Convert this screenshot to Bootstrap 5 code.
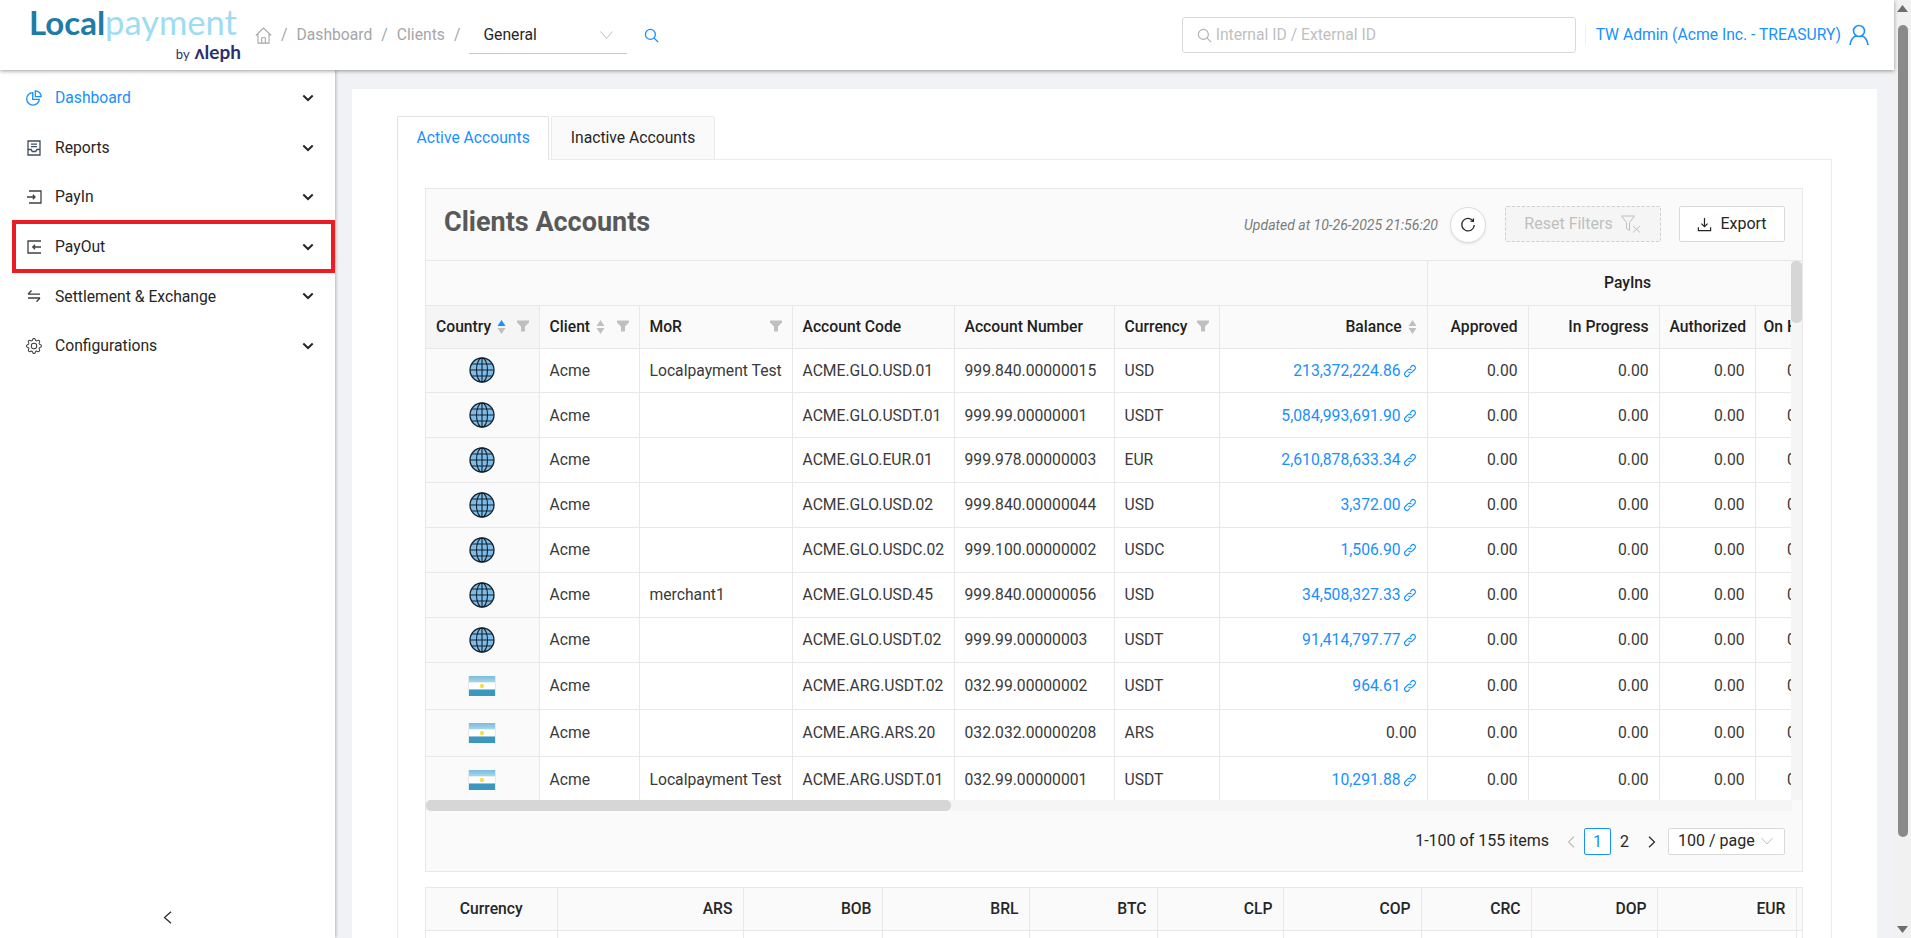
<!DOCTYPE html>
<html lang="en">
<head>
<meta charset="utf-8">
<title>Clients Accounts</title>
<link href="https://cdn.jsdelivr.net/npm/bootstrap@5.3.0/dist/css/bootstrap.min.css" rel="stylesheet">
<style>
html,body{height:938px;overflow:hidden;margin:0}
body{font-family:Roboto,"Liberation Sans",sans-serif;font-size:15.7px;background:#f0f2f5;color:#262626}
.shell{height:938px}
.shell-main{width:1894px;min-width:0}
.pg-scroll{width:17px;background:#f1f1f1;position:relative}
.pg-arrow{height:17px;font-size:0;display:flex;align-items:center;justify-content:center}
.pg-thumb{width:10px;height:812px;margin:8px auto 0;background:#8a8a8a;border-radius:5px}
.top-bar{height:70px;background:#fff;box-shadow:0 1px 4px rgba(0,0,0,.4);position:relative;z-index:3}
.logo-box{width:255px;padding-left:29px;line-height:1;flex:none}
.logo-main{font-family:Lato,sans-serif;height:40px;white-space:nowrap;margin-top:-3px;display:flex;align-items:baseline}
.logo-local{color:#1f7ca8;font-weight:700;font-size:33px}
.logo-pay{color:#9edcf3;font-weight:400;font-size:34.5px}
.logo-by{width:212px;text-align:right;font-family:Lato,sans-serif;color:#2a306d;white-space:nowrap;margin-top:-3px}
.logo-by small{font-size:13px;margin-right:5px}
.logo-by b{font-size:19px;font-weight:700}
.crumbs{color:#a6a6a6;gap:9px;white-space:nowrap}
.crumb-select{width:158px;height:38px;border-bottom:1px solid #c8c8c8;padding:0 14px;color:#262626}
.id-search{width:394px;height:36px;margin-right:9px;border:1px solid #d9d9d9;border-radius:3px;padding:0 12px 0 14px;color:#bfbfbf}
.user-link{color:#1890ff;white-space:nowrap;margin-right:25px;padding-left:10px;border-left:1px solid #f0f0f0;height:20px}
.body-row{height:868px}
.side-nav{width:335px;flex:none;background:#fff;box-shadow:1px 0 3px rgba(0,0,0,.25);padding-top:3.2px;position:relative;z-index:2}
.side-item{height:49.6px;padding:0 21px 0 26px;color:#262626;gap:13px}
.side-item.on{color:#1890ff}
.side-item svg.mi{width:16px;height:16px;flex:none}
.side-label{flex:1}
.side-mark{position:absolute;left:12px;right:0;top:0;bottom:0;border:4px solid #ed1c24;pointer-events:none;margin-top:-2px;margin-bottom:-1.4px}
.side-foot{height:42px;margin-top:auto}
.work{flex:1;min-width:0;padding:19px 17px 0 17px;overflow:hidden}
.sheet{background:#fff;height:849px;padding:27px 45px 0;overflow:hidden}
.tab-row{border-bottom:1px solid #ececec;gap:2px;height:44px}
.tab-row .nav-link{height:44px;padding:0 18.5px;line-height:42px;border:1px solid #ececec;border-radius:2px 2px 0 0;background:#fafafa;color:#262626;margin:0}
.tab-row .nav-link.active{background:#fff;color:#1890ff;border-bottom-color:#fff}
.tab-panel{border:1px solid #ececec;border-top:0;padding:28px 28px 0 27px;height:800px;overflow:hidden}
.acc-card{border:1px solid #e8e8e8;background:#fafafa;border-radius:0}
.acc-head{height:72px;padding:0 17px 1px 18px;border-bottom:1px solid #e8e8e8}
.acc-title{font-size:27px;font-weight:700;color:#595959;margin:0 0 3px}
.stamp{font-style:italic;font-size:14px;color:#7a7a7a;margin-right:12px;margin-top:3px}
.round-btn{width:36px;height:36px;padding:0;border-radius:50%;background:#fff;border:1px solid #ddd;box-shadow:0 1px 2px rgba(0,0,0,.1);margin-right:19px;margin-top:1px}
.reset-btn,.reset-btn:disabled{width:156px;height:36px;padding:0;background:#f5f5f5;border:1px dashed #d0d0d0;border-radius:2px;color:#bfbfbf;font-size:16px;opacity:1;margin-right:18px}
.export-btn{width:106px;height:36px;padding:0;background:#fff;border:1px solid #d9d9d9;border-radius:2px;color:#262626;font-size:16px}
.grid-area{height:539px}
.grid-clip{width:1366px;overflow:hidden;height:539px}
.v-track{width:11px;background:#f5f5f5}
.v-thumb{height:62px;background:#d6d6d6;border-radius:5px}
.h-track{height:11px;width:1366px;background:#f5f5f5}
.h-thumb{height:11px;width:525px;background:#d6d6d6;border-radius:5px}
.acc-table{table-layout:fixed;width:1402px;margin:0;border-collapse:collapse;font-size:15.7px}
.acc-table th,.acc-table td{padding:0 10px;border:1px solid #e8e8e8;vertical-align:middle;white-space:nowrap;overflow:hidden;box-shadow:none}
.acc-table tr>:first-child{border-left:0}
.acc-table thead tr:first-child th{border-top:0}
.acc-table th{background:#fafafa;font-weight:500;color:#1f1f1f}
.acc-table td{background:#fff;color:#3a3a3a}
.acc-table th.sorted{background:#f5f5f5}
.acc-table td.cflag{background:#fafafa;text-align:center;padding:0}
.acc-table a{color:#1890ff;text-decoration:none}
.h1-row{height:44px}.h2-row{height:43px}
.row-g{height:44.86px}.row-f{height:47.3px}
.cflag svg{display:block;margin:auto}
.lnk{width:14px;height:14px;margin-left:2px;vertical-align:-2px}
.sort{width:9px;height:16px;margin-left:6px;vertical-align:-3px}
.funnel{width:12px;height:12px;flex:none}
.pager-bar{height:60px;padding-right:17px;font-size:16px}
.pager-total{margin-right:8px}
.pager-bar .pagination{margin:0;align-items:center}
.pager-bar .page-link{width:27px;height:27px;padding:0;line-height:25px;text-align:center;background:transparent;border:1px solid transparent;color:#262626;font-size:16px}
.pager-bar .page-item.active .page-link{background:#fff;border:1px solid #1890ff;color:#1890ff;border-radius:2px}
.pager-bar .pagination li{margin-right:1px}
.page-size{width:117px;height:27px;margin-left:2px;background:#fff;border:1px solid #d9d9d9;border-radius:2px;padding:0 11px 0 9px}
.sum-wrap{margin-top:15px;border:1px solid #e8e8e8;border-bottom:0;overflow:hidden;height:60px;background:#fff}
.sum-table{table-layout:fixed;width:1430px;margin:0;border-collapse:collapse;font-size:15.7px}
.sum-table th,.sum-table td{padding:0 10px;border:1px solid #e8e8e8;text-align:right;vertical-align:middle;box-shadow:none}
.sum-table tr>:first-child{border-left:0;text-align:center}
.sum-table thead th{border-top:0;background:#fafafa;font-weight:500;color:#262626;height:42px}
.sum-table td{height:40px;background:#fff}
</style>
</head>
<body>
<svg width="0" height="0" class="position-absolute">
  <defs>
    <linearGradient id="flagTop" x1="0" y1="0" x2="0" y2="1"><stop offset="0" stop-color="#79bcdb"/><stop offset="1" stop-color="#a9d8ee"/></linearGradient>
    <symbol id="globe" viewBox="0 0 26 26">
      <circle cx="13" cy="13" r="12" fill="#7dbce9" stroke="#14202b" stroke-width="1.300"/>
      <ellipse cx="13" cy="13" rx="5.500" ry="12" fill="none" stroke="#14202b" stroke-width="1.100"/>
      <path d="M13 1v24M1 13h24M3 7h20M3 19h20" fill="none" stroke="#14202b" stroke-width="1.100"/>
    </symbol>
    <symbol id="flag" viewBox="0 0 28 20">
      <rect width="28" height="20" fill="#e8e8e8"/>
      <rect x="1" y="0" width="26" height="6.500" fill="url(#flagTop)"/>
      <rect x="1" y="6.500" width="26" height="7" fill="#fff"/>
      <rect x="1" y="13.500" width="26" height="6.500" fill="#3b96c0"/>
      <circle cx="14" cy="10" r="2.200" fill="#f7e04a"/>
    </symbol>
    <symbol id="chev" viewBox="0 0 12 8"><path d="M1.300 1.500 6 6l4.700-4.500" fill="none" stroke="#262626" stroke-width="2"/></symbol>
    <symbol id="fun" viewBox="0 0 12 12"><path d="M0 .5h12v2L8 6.500v5H4v-5L0 2.500z" fill="#bfbfbf"/></symbol>
    <symbol id="srt" viewBox="0 0 9 16"><path d="M4.500 1 8.500 7h-8z" fill="#bfbfbf"/><path d="M4.500 15 .5 9h8z" fill="#bfbfbf"/></symbol>
    <symbol id="srtup" viewBox="0 0 9 16"><path d="M4.500 1 8.500 7h-8z" fill="#1890ff"/><path d="M4.500 15 .5 9h8z" fill="#bfbfbf"/></symbol>
    <symbol id="chain" viewBox="0 0 16 16"><g fill="none" stroke="#1890ff" stroke-width="1.300" stroke-linecap="round"><path d="M6.700 9.300a2.600 2.600 0 0 0 3.700 0l3-3a2.600 2.600 0 0 0-3.700-3.700L8.600 3.800"/><path d="M9.300 6.700a2.600 2.600 0 0 0-3.700 0l-3 3a2.600 2.600 0 0 0 3.700 3.700l1.100-1.200"/></g></symbol>
  </defs>
</svg>

<div class="shell d-flex">
  <div class="shell-main d-flex flex-column">
    <header class="top-bar d-flex align-items-center">
      <div class="logo-box d-flex flex-column">
        <div class="logo-main"><span class="logo-local">Local</span><span class="logo-pay">payment</span></div>
        <div class="logo-by"><small>by</small><b>ʌleph</b></div>
      </div>
      <div class="crumbs d-flex align-items-center">
        <svg width="17" height="17" viewBox="0 0 16 16" fill="none" stroke="#a6a6a6" stroke-width="1"><path d="M.8 8 8 1l7.200 7M2.800 6.500v8.700h10.400V6.500M6.300 15.200v-5h3.400v5"/></svg>
        <span>/</span><span>Dashboard</span><span>/</span><span>Clients</span><span>/</span>
        <div class="crumb-select d-flex align-items-center justify-content-between">
          <span>General</span>
          <svg width="13" height="8" viewBox="0 0 13 8" fill="none" stroke="#bfbfbf"><path d="M.5.5 6.500 7.500 12.500.5"/></svg>
        </div>
        <svg class="ms-2" width="15" height="15" viewBox="0 0 16 16" fill="none" stroke="#1890ff" stroke-width="1.400"><circle cx="6.800" cy="6.800" r="5.300"/><path d="m10.800 10.800 4.200 4.200"/></svg>
      </div>
      <div class="ms-auto d-flex align-items-center">
        <div class="id-search d-flex align-items-center gap-1">
          <svg width="15" height="15" viewBox="0 0 16 16" fill="none" stroke="#b0b0b0" stroke-width="1.200"><circle cx="6.800" cy="6.800" r="5.300"/><path d="m10.800 10.800 4.200 4.200"/></svg>
          <span>Internal ID / External ID</span>
        </div>
        <div class="user-link d-flex align-items-center">TW Admin (Acme Inc. - TREASURY)
          <svg class="ms-2" width="20" height="22" viewBox="0 0 20 22" fill="none" stroke="#1890ff" stroke-width="1.600"><circle cx="10" cy="7" r="5.500"/><path d="M1 21c.5-5 3.500-8.500 6-9M19 21c-.5-5-3.500-8.500-6-9"/></svg>
        </div>
      </div>
    </header>

    <div class="body-row d-flex">
      <nav class="side-nav d-flex flex-column">
        <a class="side-item on d-flex align-items-center text-decoration-none" href="#">
          <svg class="mi" viewBox="0 0 16 16" fill="none" stroke="#1890ff" stroke-width="1.300"><path d="M6.700 2.600A6.300 6.300 0 1 0 13.300 9.400H6.700z"/><path d="M9.300.8v5.900h5.900A5.900 5.900 0 0 0 9.300.8z"/></svg>
          <span class="side-label">Dashboard</span>
          <svg width="12" height="8"><use href="#chev"/></svg>
        </a>
        <a class="side-item d-flex align-items-center text-decoration-none" href="#">
          <svg class="mi" viewBox="0 0 16 16" fill="none" stroke="#3f4d5e" stroke-width="1.300"><path d="M2 1h12v14H2zM5 4.200h6M5 6.700h6M2 9.500h3.200l1 2h3.600l1-2H14"/></svg>
          <span class="side-label">Reports</span>
          <svg width="12" height="8"><use href="#chev"/></svg>
        </a>
        <a class="side-item d-flex align-items-center text-decoration-none" href="#">
          <svg class="mi" viewBox="0 0 16 16" fill="none" stroke="#3f4040" stroke-width="1.300"><path d="M3 2h12v12H3M1 8h8M6.800 5.800 9 8l-2.200 2.200"/></svg>
          <span class="side-label">PayIn</span>
          <svg width="12" height="8"><use href="#chev"/></svg>
        </a>
        <a class="side-item d-flex align-items-center text-decoration-none position-relative" href="#">
          <svg class="mi" viewBox="0 0 16 16" fill="none" stroke="#3f4040" stroke-width="1.300"><path d="M15 2H2v12h13M15 8H7M9 5.800 6.800 8 9 10.200"/></svg>
          <span class="side-label">PayOut</span>
          <svg width="12" height="8"><use href="#chev"/></svg>
          <span class="side-mark"></span>
        </a>
        <a class="side-item d-flex align-items-center text-decoration-none" href="#">
          <svg class="mi" viewBox="0 0 16 16" fill="none" stroke="#3f4040" stroke-width="1.300"><path d="M2 6.200h12M2 6.200 5.500 2.500M14 10H2M14 10l-3.500 3.700"/></svg>
          <span class="side-label">Settlement &amp; Exchange</span>
          <svg width="12" height="8"><use href="#chev"/></svg>
        </a>
        <a class="side-item d-flex align-items-center text-decoration-none" href="#">
          <svg class="mi" viewBox="0 0 16 16" fill="#3f4040"><path d="M8 4.754a3.246 3.246 0 1 0 0 6.492 3.246 3.246 0 0 0 0-6.492zM5.754 8a2.246 2.246 0 1 1 4.492 0 2.246 2.246 0 0 1-4.492 0z"/><path d="M9.796 1.343c-.527-1.790-3.065-1.790-3.592 0l-.094.319a.873.873 0 0 1-1.255.52l-.292-.16c-1.640-.892-3.433.902-2.540 2.541l.159.292a.873.873 0 0 1-.52 1.255l-.319.094c-1.790.527-1.790 3.065 0 3.592l.319.094a.873.873 0 0 1 .52 1.255l-.16.292c-.892 1.640.901 3.434 2.541 2.540l.292-.159a.873.873 0 0 1 1.255.52l.094.319c.527 1.790 3.065 1.790 3.592 0l.094-.319a.873.873 0 0 1 1.255-.52l.292.16c1.640.893 3.434-.902 2.540-2.541l-.159-.292a.873.873 0 0 1 .52-1.255l.319-.094c1.790-.527 1.790-3.065 0-3.592l-.319-.094a.873.873 0 0 1-.52-1.255l.16-.292c.893-1.640-.902-3.433-2.541-2.540l-.292.159a.873.873 0 0 1-1.255-.52l-.094-.319zm-2.633.283c.246-.835 1.428-.835 1.674 0l.094.319a1.873 1.873 0 0 0 2.693 1.115l.291-.16c.764-.415 1.600.42 1.184 1.185l-.159.292a1.873 1.873 0 0 0 1.116 2.692l.318.094c.835.246.835 1.428 0 1.674l-.319.094a1.873 1.873 0 0 0-1.115 2.693l.16.291c.415.764-.42 1.600-1.185 1.184l-.291-.159a1.873 1.873 0 0 0-2.693 1.116l-.094.318c-.246.835-1.428.835-1.674 0l-.094-.319a1.873 1.873 0 0 0-2.692-1.115l-.292.16c-.764.415-1.600-.42-1.184-1.185l.159-.291A1.873 1.873 0 0 0 1.945 8.930l-.319-.094c-.835-.246-.835-1.428 0-1.674l.319-.094A1.873 1.873 0 0 0 3.060 4.377l-.16-.292c-.415-.764.42-1.600 1.185-1.184l.292.159a1.873 1.873 0 0 0 2.692-1.115l.094-.319z"/></svg>
          <span class="side-label">Configurations</span>
          <svg width="12" height="8"><use href="#chev"/></svg>
        </a>
        <div class="side-foot d-flex justify-content-center align-items-center">
          <svg width="9" height="13" viewBox="0 0 9 13" fill="none" stroke="#262626" stroke-width="1.200"><path d="M8 .7 1.500 6.500 8 12.300"/></svg>
        </div>
      </nav>

      <main class="work">
        <div class="sheet">
          <ul class="nav nav-tabs tab-row">
            <li class="nav-item"><a class="nav-link active" href="#">Active Accounts</a></li>
            <li class="nav-item"><a class="nav-link" href="#">Inactive Accounts</a></li>
          </ul>
          <div class="tab-panel">
            <section class="acc-card">
              <div class="acc-head d-flex align-items-center">
                <h2 class="acc-title me-auto">Clients Accounts</h2>
                <span class="stamp">Updated at 10-26-2025 21:56:20</span>
                <button class="btn round-btn d-flex align-items-center justify-content-center" type="button">
                  <svg width="16" height="16" viewBox="0 0 16 16" fill="none" stroke="#262626" stroke-width="1.300"><path d="M13.300 4.200A6.300 6.300 0 1 0 14.300 8"/><path d="m13.500 1.500-.2 2.900-2.900-.2"/></svg>
                </button>
                <button class="btn reset-btn d-flex align-items-center justify-content-center gap-2" type="button" disabled>
                  Reset Filters
                  <svg width="21" height="18" viewBox="0 0 21 18" fill="none" stroke="#bfbfbf"><path d="M.5 1h13l-5 6.500v8l-3-2V7.500zM12 11l7 6.500M19 11l-7 6.500"/></svg>
                </button>
                <button class="btn export-btn d-flex align-items-center justify-content-center gap-2" type="button">
                  <svg width="15" height="15" viewBox="0 0 16 16" fill="none" stroke="#262626" stroke-width="1.300"><path d="M8 1v9M4.700 7 8 10.300 11.300 7M1.500 11v3.500h13V11"/></svg>
                  Export
                </button>
              </div>

              <div class="grid-area d-flex">
                <div class="grid-clip">
                  <table class="table acc-table">
                    <colgroup><col style="width:113px"><col style="width:100px"><col style="width:153px"><col style="width:162px"><col style="width:160px"><col style="width:105px"><col style="width:208px"><col style="width:101px"><col style="width:131px"><col style="width:96px"><col style="width:73px"></colgroup>
                    <thead>
                      <tr class="h1-row"><th colspan="7"></th><th colspan="4" class="text-center">PayIns</th></tr>
                      <tr class="h2-row">
                        <th class="sorted"><div class="d-flex align-items-center justify-content-between"><span>Country<svg class="sort"><use href="#srtup"/></svg></span><svg class="funnel"><use href="#fun"/></svg></div></th>
                        <th><div class="d-flex align-items-center justify-content-between"><span>Client<svg class="sort"><use href="#srt"/></svg></span><svg class="funnel"><use href="#fun"/></svg></div></th>
                        <th><div class="d-flex align-items-center justify-content-between"><span>MoR</span><svg class="funnel"><use href="#fun"/></svg></div></th>
                        <th>Account Code</th>
                        <th>Account Number</th>
                        <th><div class="d-flex align-items-center justify-content-between"><span>Currency</span><svg class="funnel"><use href="#fun"/></svg></div></th>
                        <th class="text-end">Balance<svg class="sort"><use href="#srt"/></svg></th>
                        <th class="text-end">Approved</th>
                        <th class="text-end">In Progress</th>
                        <th class="text-end">Authorized</th>
                        <th class="ps-2">On Hold</th>
                      </tr>
                    </thead>
                    <tbody>
                      <tr class="row-g"><td class="cflag"><svg width="26" height="26"><use href="#globe"/></svg></td><td>Acme</td><td>Localpayment Test</td><td>ACME.GLO.USD.01</td><td>999.840.00000015</td><td>USD</td><td class="text-end"><a href="#">213,372,224.86<svg class="lnk"><use href="#chain"/></svg></a></td><td class="text-end">0.00</td><td class="text-end">0.00</td><td class="text-end">0.00</td><td class="text-end">0.00</td></tr>
                      <tr class="row-g"><td class="cflag"><svg width="26" height="26"><use href="#globe"/></svg></td><td>Acme</td><td></td><td>ACME.GLO.USDT.01</td><td>999.99.00000001</td><td>USDT</td><td class="text-end"><a href="#">5,084,993,691.90<svg class="lnk"><use href="#chain"/></svg></a></td><td class="text-end">0.00</td><td class="text-end">0.00</td><td class="text-end">0.00</td><td class="text-end">0.00</td></tr>
                      <tr class="row-g"><td class="cflag"><svg width="26" height="26"><use href="#globe"/></svg></td><td>Acme</td><td></td><td>ACME.GLO.EUR.01</td><td>999.978.00000003</td><td>EUR</td><td class="text-end"><a href="#">2,610,878,633.34<svg class="lnk"><use href="#chain"/></svg></a></td><td class="text-end">0.00</td><td class="text-end">0.00</td><td class="text-end">0.00</td><td class="text-end">0.00</td></tr>
                      <tr class="row-g"><td class="cflag"><svg width="26" height="26"><use href="#globe"/></svg></td><td>Acme</td><td></td><td>ACME.GLO.USD.02</td><td>999.840.00000044</td><td>USD</td><td class="text-end"><a href="#">3,372.00<svg class="lnk"><use href="#chain"/></svg></a></td><td class="text-end">0.00</td><td class="text-end">0.00</td><td class="text-end">0.00</td><td class="text-end">0.00</td></tr>
                      <tr class="row-g"><td class="cflag"><svg width="26" height="26"><use href="#globe"/></svg></td><td>Acme</td><td></td><td>ACME.GLO.USDC.02</td><td>999.100.00000002</td><td>USDC</td><td class="text-end"><a href="#">1,506.90<svg class="lnk"><use href="#chain"/></svg></a></td><td class="text-end">0.00</td><td class="text-end">0.00</td><td class="text-end">0.00</td><td class="text-end">0.00</td></tr>
                      <tr class="row-g"><td class="cflag"><svg width="26" height="26"><use href="#globe"/></svg></td><td>Acme</td><td>merchant1</td><td>ACME.GLO.USD.45</td><td>999.840.00000056</td><td>USD</td><td class="text-end"><a href="#">34,508,327.33<svg class="lnk"><use href="#chain"/></svg></a></td><td class="text-end">0.00</td><td class="text-end">0.00</td><td class="text-end">0.00</td><td class="text-end">0.00</td></tr>
                      <tr class="row-g"><td class="cflag"><svg width="26" height="26"><use href="#globe"/></svg></td><td>Acme</td><td></td><td>ACME.GLO.USDT.02</td><td>999.99.00000003</td><td>USDT</td><td class="text-end"><a href="#">91,414,797.77<svg class="lnk"><use href="#chain"/></svg></a></td><td class="text-end">0.00</td><td class="text-end">0.00</td><td class="text-end">0.00</td><td class="text-end">0.00</td></tr>
                      <tr class="row-f"><td class="cflag"><svg width="28" height="20"><use href="#flag"/></svg></td><td>Acme</td><td></td><td>ACME.ARG.USDT.02</td><td>032.99.00000002</td><td>USDT</td><td class="text-end"><a href="#">964.61<svg class="lnk"><use href="#chain"/></svg></a></td><td class="text-end">0.00</td><td class="text-end">0.00</td><td class="text-end">0.00</td><td class="text-end">0.00</td></tr>
                      <tr class="row-f"><td class="cflag"><svg width="28" height="20"><use href="#flag"/></svg></td><td>Acme</td><td></td><td>ACME.ARG.ARS.20</td><td>032.032.00000208</td><td>ARS</td><td class="text-end">0.00</td><td class="text-end">0.00</td><td class="text-end">0.00</td><td class="text-end">0.00</td><td class="text-end">0.00</td></tr>
                      <tr class="row-f"><td class="cflag"><svg width="28" height="20"><use href="#flag"/></svg></td><td>Acme</td><td>Localpayment Test</td><td>ACME.ARG.USDT.01</td><td>032.99.00000001</td><td>USDT</td><td class="text-end"><a href="#">10,291.88<svg class="lnk"><use href="#chain"/></svg></a></td><td class="text-end">0.00</td><td class="text-end">0.00</td><td class="text-end">0.00</td><td class="text-end">0.00</td></tr>
                    </tbody>
                  </table>
                </div>
                <div class="v-track"><div class="v-thumb"></div></div>
              </div>
              <div class="h-track"><div class="h-thumb"></div></div>

              <div class="pager-bar d-flex align-items-center justify-content-end">
                <span class="pager-total">1-100 of 155 items</span>
                <ul class="pagination">
                  <li class="page-item"><a class="page-link" href="#"><svg width="8" height="12" viewBox="0 0 8 12" fill="none" stroke="#bfbfbf" stroke-width="1.200"><path d="M7 .7 1.500 6 7 11.300"/></svg></a></li>
                  <li class="page-item active"><a class="page-link" href="#">1</a></li>
                  <li class="page-item"><a class="page-link" href="#">2</a></li>
                  <li class="page-item"><a class="page-link" href="#"><svg width="8" height="12" viewBox="0 0 8 12" fill="none" stroke="#262626" stroke-width="1.200"><path d="M1 .7 6.500 6 1 11.300"/></svg></a></li>
                </ul>
                <div class="page-size d-flex align-items-center justify-content-between">
                  <span>100 / page</span>
                  <svg width="12" height="8" viewBox="0 0 12 8" fill="none" stroke="#bfbfbf"><path d="M.5 1 6 7l5.500-6"/></svg>
                </div>
              </div>
            </section>

            <div class="sum-wrap">
              <table class="table sum-table">
                <colgroup><col style="width:131px"><col style="width:186px"><col style="width:139px"><col style="width:147px"><col style="width:128px"><col style="width:126px"><col style="width:138px"><col style="width:110px"><col style="width:126px"><col style="width:139px"><col style="width:60px"></colgroup>
                <thead><tr><th>Currency</th><th>ARS</th><th>BOB</th><th>BRL</th><th>BTC</th><th>CLP</th><th>COP</th><th>CRC</th><th>DOP</th><th>EUR</th><th></th></tr></thead>
                <tbody><tr><td></td><td></td><td></td><td></td><td></td><td></td><td></td><td></td><td></td><td></td><td></td></tr></tbody>
              </table>
            </div>
          </div>
        </div>
      </main>
    </div>
  </div>

  <aside class="pg-scroll d-flex flex-column">
    <div class="pg-arrow"><svg width="11" height="7" viewBox="0 0 11 7"><path d="M5.500 0 11 7H0z" fill="#6e6e6e"/></svg></div>
    <div class="pg-thumb"></div>
    <div class="pg-arrow mt-auto"><svg width="11" height="7" viewBox="0 0 11 7"><path d="M5.500 7 11 0H0z" fill="#6e6e6e"/></svg></div>
  </aside>
</div>
<script src="https://cdn.jsdelivr.net/npm/bootstrap@5.3.0/dist/js/bootstrap.bundle.min.js"></script>
</body>
</html>
